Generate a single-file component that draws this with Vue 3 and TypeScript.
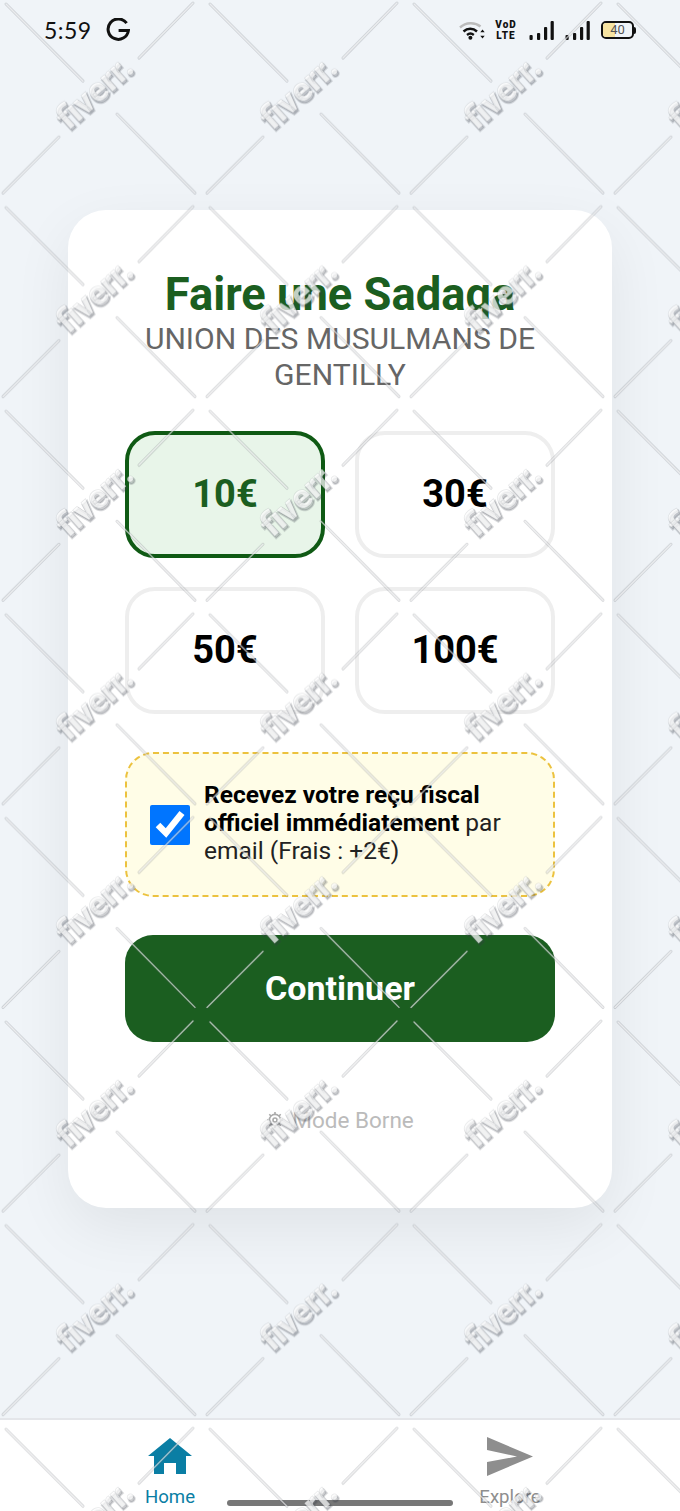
<template>
  <div class="screen">
    <header class="status-bar">
      <div class="status-left">
        <span class="clock">5:59</span>
        <svg class="g-icon" viewBox="0 0 24 24" aria-hidden="true">
          <path d="M20.6 5.2A10.2 10.2 0 1 0 22.4 12.6H12.6" />
        </svg>
      </div>
      <div class="status-right">
        <svg class="wifi" viewBox="0 0 26 19" aria-hidden="true">
          <path class="wifi-off" d="M1 6.5C7 1 16 1 21.5 5.5" />
          <path d="M4.5 10.5C8.5 6.8 14 6.8 18 10.5" />
          <path d="M8 14C10.2 12.2 12.6 12.2 14.8 14" />
          <circle cx="11.4" cy="16.8" r="2" class="solid" />
          <path class="solid" d="M23.5 8.5l2.2 2.8h-4.4zM23.5 17.5l2.2-2.8h-4.4z" />
        </svg>
        <div class="volte"><span>VoD</span><span>LTE</span></div>
        <svg v-for="n in 2" :key="n" class="signal" viewBox="0 0 25 19" aria-hidden="true">
          <rect x="0.5" y="14" width="3.2" height="5" rx="1" />
          <rect x="8" y="12" width="3.2" height="7" rx="1" />
          <rect x="15" y="6" width="3.2" height="13" rx="1" />
          <rect x="21.6" y="0" width="3.2" height="19" rx="1" />
        </svg>
        <div class="battery">
          <div class="battery-body">
            <i class="battery-fill" :style="{ width: batteryLevel + '%' }"></i>
            <span>{{ batteryLevel }}</span>
          </div>
          <i class="battery-tip"></i>
        </div>
      </div>
    </header>

    <main class="content">
      <section class="card">
        <h1>Faire une Sadaqa</h1>
        <p class="org">UNION DES MUSULMANS DE GENTILLY</p>

        <div class="amounts">
          <button
            v-for="amount in amounts"
            :key="amount"
            type="button"
            class="amount"
            :class="{ 'amount--active': amount === selected }"
            @click="selected = amount"
          >
            {{ amount }}€
          </button>
        </div>

        <label class="receipt">
          <input v-model="wantsReceipt" type="checkbox" />
          <span><strong>Recevez votre reçu fiscal officiel immédiatement</strong> par email (Frais : +2€)</span>
        </label>

        <button type="button" class="continue">Continuer</button>

        <div class="kiosk">
          <svg viewBox="0 0 18 18" aria-hidden="true">
            <circle cx="9" cy="9" r="5.6" />
            <circle cx="9" cy="9" r="2" />
            <path d="M9 1v2.4M9 14.6V17M1 9h2.4M14.6 9H17M3.3 3.3l1.7 1.7M13 13l1.7 1.7M14.7 3.3L13 5M5 13l-1.7 1.7" />
          </svg>
          <span>Mode Borne</span>
        </div>
      </section>
    </main>

    <nav class="tabs">
      <a class="tab tab--active">
        <svg viewBox="0 0 46 39" aria-hidden="true">
          <path d="M23 1L45 19H39V37H29V26H17V37H7V19H1Z" />
        </svg>
        <span>Home</span>
      </a>
      <a class="tab">
        <svg viewBox="0 0 46 39" aria-hidden="true">
          <path d="M0 0L46 19.5L0 39V25L30 19.5L0 13Z" />
        </svg>
        <span>Explore</span>
      </a>
    </nav>

    <i class="home-indicator"></i>

    <svg class="watermark" width="680" height="1511" aria-hidden="true">
      <defs>
        <pattern id="wm" width="204" height="203.6" patternUnits="userSpaceOnUse">
          <g class="wm-lines">
            <path class="wm-line-dark" d="M6 4L83 81M193 3L139 58M59 137L3 193M117 114L195 193" />
            <path class="wm-line-light" d="M6 4L83 81M193 3L139 58M59 137L3 193M117 114L195 193" />
          </g>
          <text class="wm-shadow" transform="translate(70 133) rotate(-42)">fiverr.</text>
          <text class="wm-text" transform="translate(68.5 131) rotate(-42)">fiverr.</text>
        </pattern>
      </defs>
      <rect width="680" height="1511" fill="url(#wm)" />
    </svg>
  </div>
</template>

<script setup lang="ts">
import { ref } from 'vue';

const batteryLevel = 40;
const amounts = [10, 30, 50, 100];
const selected = ref(10);
const wantsReceipt = ref(true);
</script>

<style>
body {
  background: #f0f4f8;
}
</style>

<style scoped>
.screen {
  position: relative;
  display: flex;
  flex-direction: column;
  width: 680px;
  height: 1511px;
  overflow: hidden;
  background: #f0f4f8;
  font-family: Roboto, 'Liberation Sans', sans-serif;
}

.status-bar {
  display: flex;
  justify-content: space-between;
  align-items: center;
  height: 60px;
  padding: 0 44px;
  color: #111;
}

.status-left,
.status-right {
  display: flex;
  align-items: center;
}

.clock {
  width: 45px;
  font-family: Lato, sans-serif;
  font-size: 23px;
  letter-spacing: 0.4px;
}

.g-icon {
  width: 24px;
  height: 24px;
  margin-left: 17px;
  fill: none;
  stroke: #111;
  stroke-width: 3;
}

.wifi {
  width: 26px;
  height: 19px;
  fill: none;
  stroke: #111;
  stroke-width: 2.4;
}

.wifi .wifi-off {
  stroke: #bbb;
}

.wifi .solid {
  fill: #111;
  stroke: none;
}

.volte {
  display: flex;
  flex-direction: column;
  width: 24px;
  margin-left: 9px;
  font-size: 10px;
  font-weight: 900;
  line-height: 10px;
  letter-spacing: 1px;
  text-align: center;
  transform: scaleY(1.1);
}

.signal {
  width: 25px;
  height: 19px;
  margin-left: 11px;
  fill: #111;
}

.battery {
  display: flex;
  align-items: center;
  margin-left: 11px;
}

.battery-body {
  position: relative;
  width: 33px;
  height: 18px;
  border: 2px solid #111;
  border-radius: 5px;
  box-sizing: border-box;
  overflow: hidden;
  text-align: center;
}

.battery-fill {
  position: absolute;
  inset: 0 auto 0 0;
  background: #f6e3a1;
}

.battery-body span {
  position: relative;
  display: block;
  font-size: 13px;
  line-height: 14px;
  color: #555;
}

.battery-tip {
  width: 2px;
  height: 7px;
  border-radius: 0 2px 2px 0;
  background: #111;
}

.content {
  flex: 1;
  padding: 150px 68px 0;
}

.card {
  display: flex;
  flex-direction: column;
  height: 998px;
  box-sizing: border-box;
  padding: 57px 57px 0;
  background: #fff;
  border-radius: 38px;
  box-shadow: 0 20px 60px rgba(0, 0, 0, 0.07);
}

h1 {
  margin: 0;
  font-size: 45.3px;
  font-weight: 700;
  line-height: 55px;
  text-align: center;
  color: #1b5e20;
}

.org {
  margin: -1px 0 38px;
  font-size: 30.1px;
  line-height: 36px;
  text-align: center;
  color: #666;
}

.amounts {
  display: grid;
  grid-template-columns: 1fr 1fr;
  gap: 29px 30px;
}

.amount {
  height: 127px;
  padding: 0 0 2px;
  background: #fff;
  border: 4px solid #eee;
  border-radius: 30px;
  font-family: inherit;
  font-size: 38px;
  font-weight: 700;
  color: #000;
}

.amount--active {
  background: #e8f5e9;
  border-color: #0f5a14;
  color: #1b5e20;
}

.receipt {
  display: flex;
  align-items: center;
  gap: 14px;
  height: 145px;
  box-sizing: border-box;
  margin-top: 38px;
  padding: 0 23px;
  background: #fffde7;
  border: 2px dashed #ecc23e;
  border-radius: 28px;
  font-size: 24.5px;
  line-height: 28px;
  color: #222;
}

.receipt input {
  flex: none;
  width: 40px;
  height: 40px;
  margin: 0;
}

.receipt span {
  margin-bottom: 4px;
}

.receipt strong {
  color: #000;
}

.continue {
  height: 107px;
  margin-top: 38px;
  padding: 0 0 2px;
  background: #1b5e20;
  border: 0;
  border-radius: 28px;
  font-family: inherit;
  font-size: 34px;
  font-weight: 700;
  color: #fff;
}

.kiosk {
  display: flex;
  justify-content: center;
  align-items: center;
  gap: 8px;
  margin-top: 63px;
  font-size: 22.5px;
  line-height: 30px;
  color: #bbb;
}

.kiosk svg {
  width: 18px;
  height: 18px;
  fill: none;
  stroke: #aaa;
  stroke-width: 1.6;
}

.tabs {
  display: flex;
  height: 93px;
  box-sizing: border-box;
  background: #fff;
  border-top: 2px solid #e4e6ea;
}

.tab {
  flex: 1;
  display: flex;
  flex-direction: column;
  align-items: center;
  padding-top: 17px;
  font-size: 18.6px;
  font-weight: 400;
  line-height: 24px;
  color: #8e8e8e;
  fill: #8e8e8e;
}

.tab svg {
  width: 46px;
  height: 39px;
  margin-bottom: 9px;
}

.tab--active {
  color: #0a7ea4;
  fill: #0a7ea4;
}

.home-indicator {
  position: absolute;
  left: 227px;
  bottom: 5px;
  width: 226px;
  height: 6px;
  border-radius: 3px;
  background: #777;
}

.watermark {
  position: absolute;
  inset: 0;
  pointer-events: none;
}

.wm-lines {
  fill: none;
  stroke-linecap: round;
}

.wm-line-dark {
  stroke: rgba(60, 65, 75, 0.2);
  stroke-width: 3;
}

.wm-line-light {
  stroke: rgba(255, 255, 255, 0.6);
  stroke-width: 1.4;
}

.wm-shadow,
.wm-text {
  font-family: Roboto, sans-serif;
  font-size: 34px;
  font-weight: 900;
}

.wm-shadow {
  fill: rgba(50, 55, 65, 0.24);
  stroke: rgba(50, 55, 65, 0.18);
  stroke-width: 2;
}

.wm-text {
  fill: rgba(255, 255, 255, 0.72);
  stroke: rgba(60, 65, 75, 0.12);
  stroke-width: 0.8;
}
</style>
